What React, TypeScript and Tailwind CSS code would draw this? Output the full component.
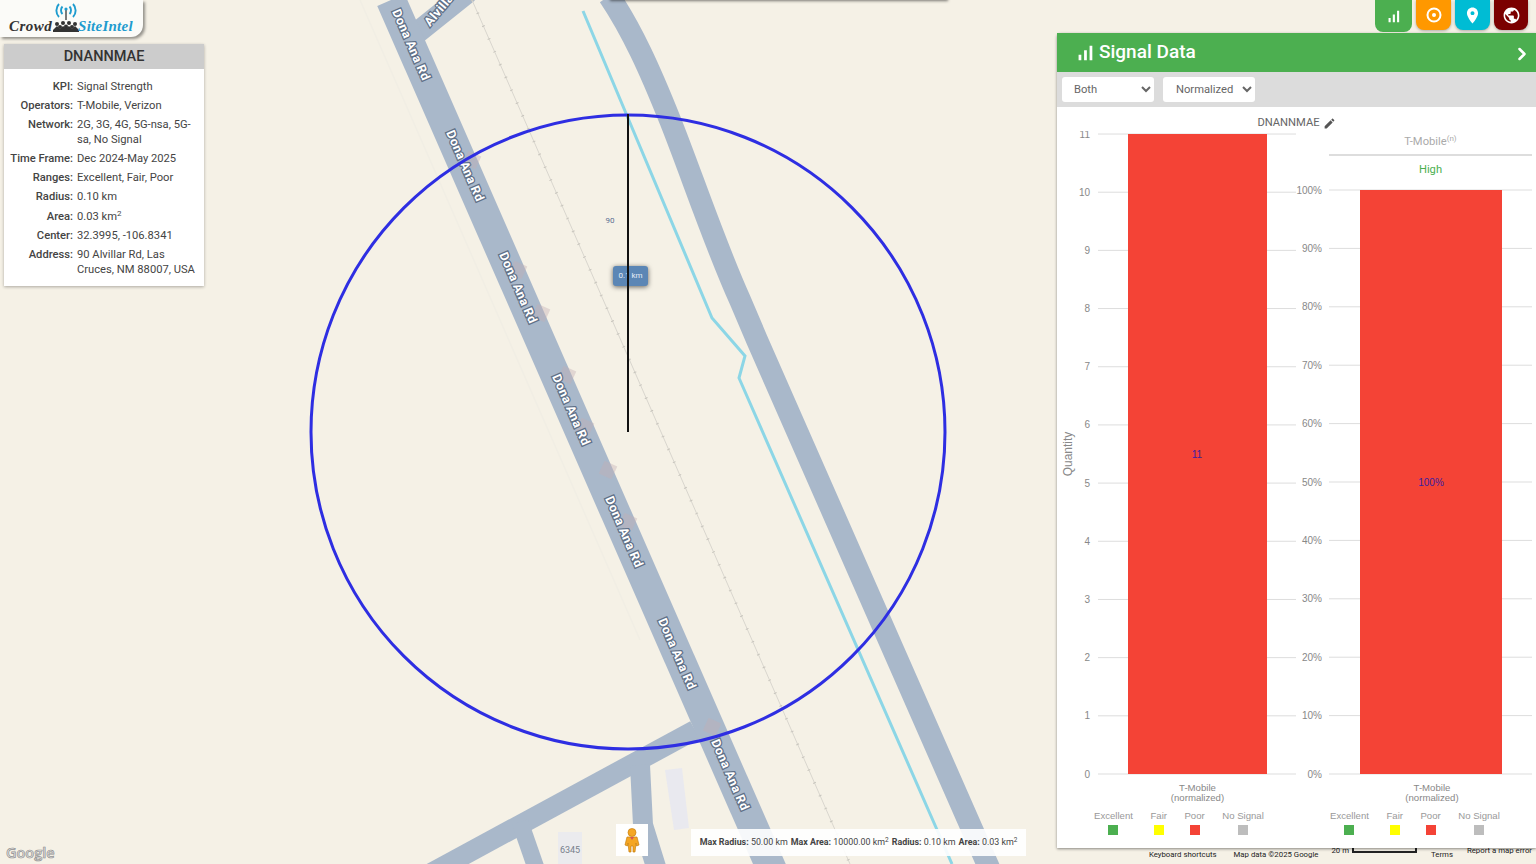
import { ChevronRight } from 'lucide-react';

const roadLabels = [
  { x: 411, y: 45 },
  { x: 465, y: 166 },
  { x: 518, y: 288 },
  { x: 571, y: 410 },
  { x: 624, y: 532 },
  { x: 677, y: 654 },
  { x: 730, y: 775 },
];

const patches = [
  { x: 472, y: 160 },
  { x: 518, y: 270 },
  { x: 541, y: 313 },
  { x: 567, y: 375 },
  { x: 585, y: 427 },
  { x: 608, y: 470 },
  { x: 628, y: 522 },
  { x: 712, y: 727 },
];

const details = [
  { label: 'KPI:', value: 'Signal Strength' },
  { label: 'Operators:', value: 'T-Mobile, Verizon' },
  { label: 'Network:', value: '2G, 3G, 4G, 5G-nsa, 5G-sa, No Signal' },
  { label: 'Time Frame:', value: 'Dec 2024-May 2025' },
  { label: 'Ranges:', value: 'Excellent, Fair, Poor' },
  { label: 'Radius:', value: '0.10 km' },
  { label: 'Area:', value: <>0.03 km<sup className="text-[8px]">2</sup></> },
  { label: 'Center:', value: '32.3995, -106.8341' },
  { label: 'Address:', value: '90 Alvillar Rd, Las Cruces, NM 88007, USA' },
];

const legend = [
  { label: 'Excellent', color: 'bg-[#4caf50]' },
  { label: 'Fair', color: 'bg-[#ffff00]' },
  { label: 'Poor', color: 'bg-[#f44336]' },
  { label: 'No Signal', color: 'bg-[#bdbdbd]' },
];

const countTicks = [0, 1, 2, 3, 4, 5, 6, 7, 8, 9, 10, 11];
const percentTicks = [0, 10, 20, 30, 40, 50, 60, 70, 80, 90, 100];

function MapLayer() {
  return (
    <svg className="absolute inset-0" width="1536" height="864" viewBox="0 0 1536 864">
      <path d="M360 0L640 640" stroke="#f1eee4" strokeWidth="1.5" fill="none" />
      <rect x="558" y="832" width="24" height="32" fill="#ebebee" />
      <path d="M665 770l17-2 7 60-15 2z" fill="#e9e9ef" />
      <g stroke="#a9b8ca" fill="none" strokeLinejoin="round">
        <path d="M695 730L420 879" strokeWidth="20" />
        <path d="M640 765L643 825L657 870" strokeWidth="20" />
        <path d="M520 822L536 868" strokeWidth="17" />
        <path d="M413 36L468 -8" strokeWidth="22" />
        <path d="M391 0L772 870" strokeWidth="30" />
        <path d="M609 -4C632 30 650 70 670 120C690 170 715 245 740 300L757 340L990 870" strokeWidth="22" />
      </g>
      <path d="M472 0L850 864" stroke="#d9d6ce" strokeWidth="1" fill="none" />
      <path d="M472 0L850 864" stroke="#c9c6be" strokeWidth="3" strokeDasharray="1 13" fill="none" />
      <path d="M583 11L712 318L745 356L739 378L938 832L952 864" stroke="#8cd6e6" strokeWidth="3" fill="none" />
      {patches.map((p) => (
        <rect key={p.x} x={p.x - 7} y={p.y - 7} width="14" height="14" fill="#c3aeb5" opacity="0.4" transform={`rotate(25 ${p.x} ${p.y})`} />
      ))}
      <g fill="#ffffff" stroke="#5f7087" strokeWidth="2.5" fontFamily="Roboto, sans-serif" fontWeight="700" fontSize="12.5" letterSpacing="0.4" style={{ paintOrder: 'stroke' }}>
        {roadLabels.map((l) => (
          <text key={l.y} x={l.x} y={l.y + 4} textAnchor="middle" transform={`rotate(66.4 ${l.x} ${l.y})`}>
            Dona Ana Rd
          </text>
        ))}
        <text x="430" y="27" transform="rotate(-50 430 27)">Alvillar Rd</text>
      </g>
      <text x="570" y="853" textAnchor="middle" fontFamily="Roboto, sans-serif" fontSize="9" fill="#77808c">6345</text>
      <text x="610" y="223" textAnchor="middle" fontFamily="Roboto, sans-serif" fontSize="8" fill="#5a6f92">90</text>
      <circle cx="628" cy="432" r="317" fill="none" stroke="#2e2ee2" strokeWidth="3" />
      <text x="6" y="858" fontFamily="'Open Sans', sans-serif" fontWeight="600" fontSize="14.5" fill="#e4e4e4" stroke="#8f8f8f" strokeWidth="0.7">Google</text>
    </svg>
  );
}

function Logo() {
  return (
    <div className="absolute left-0 top-0 flex h-[37px] w-[143px] flex-col items-start rounded-br-xl bg-[#fbfbf8] pl-[9px] shadow-[2px_2px_3px_rgba(0,0,0,0.4)]">
      <svg className="ml-[46px] mt-[2px]" width="22" height="19" viewBox="0 0 22 19" fill="none" stroke="#1f9ccf" strokeWidth="1.9">
        <path d="M4 2C0.5 5.5 0.5 11.5 4 15M18 2C21.5 5.5 21.5 11.5 18 15M7.5 4.5C5.5 6.5 5.5 10 7.5 12M14.5 4.5C16.5 6.5 16.5 10 14.5 12" />
        <path d="M11 7V18" stroke="#444" strokeWidth="1.4" />
        <circle cx="11" cy="7" r="1.6" fill="#1f9ccf" stroke="none" />
      </svg>
      <div className="-mt-[2px] flex items-center font-['Liberation_Serif',serif] text-[15px] font-bold italic leading-[15px] tracking-[0.45px]">
        <span className="text-[#333333]">Crowd</span>
        <svg className="ml-[1px]" width="26" height="13" viewBox="0 0 26 13" fill="#333333">
          <circle cx="4" cy="4" r="2" />
          <circle cx="10" cy="3" r="2" />
          <circle cx="16" cy="3" r="2" />
          <circle cx="22" cy="4" r="2" />
          <circle cx="7" cy="7" r="2" />
          <circle cx="13" cy="6.5" r="2" />
          <circle cx="19" cy="7" r="2" />
          <path d="M0 10l4-4 3 3 3-3 3 2 3-2 3 3 3-3 4 4v2H0z" />
        </svg>
        <span className="-ml-[1px] tracking-[0.25px] text-[#1f9ccf]">SiteIntel</span>
      </div>
    </div>
  );
}

function InfoCard() {
  return (
    <div className="absolute left-[4px] top-[44px] w-[200px] bg-white font-['Roboto',sans-serif] text-[#444444] shadow-[0_1px_3px_rgba(0,0,0,0.3)]">
      <div className="flex h-[25px] items-center justify-center bg-[#cccccc] text-[14.5px] font-medium text-[#333333]">DNANNMAE</div>
      <div className="grid grid-cols-[69px_118px] gap-x-[4px] gap-y-[4.7px] pb-[9px] pt-[11px] text-[11.2px] leading-[14.5px]">
        {details.map((d) => (
          <div key={d.label} className="contents">
            <div className="whitespace-nowrap text-right font-medium">{d.label}</div>
            <div>{d.value}</div>
          </div>
        ))}
      </div>
    </div>
  );
}

function TopButtons() {
  return (
    <div className="absolute right-[8px] top-0 flex items-start gap-[4px]">
      <div className="flex h-[32px] w-[37px] items-center justify-center rounded-b-lg bg-[#4caf50]">
        <svg width="17" height="17" viewBox="0 0 24 24" fill="#ffffff"><path d="M17 4h3v16h-3zM5 14h3v6H5zm6-5h3v11h-3z" /></svg>
      </div>
      <div className="flex h-[30px] w-[35px] items-center justify-center rounded-b-lg bg-[#ff9800] shadow-[0_1px_3px_rgba(0,0,0,0.3)]">
        <svg width="16" height="16" viewBox="0 0 16 16" fill="none" stroke="#ffffff" strokeWidth="2"><circle cx="8" cy="8" r="6.5" /><circle cx="8" cy="8" r="2" fill="#ffffff" stroke="none" /></svg>
      </div>
      <div className="flex h-[30px] w-[35px] items-center justify-center rounded-b-lg bg-[#00bcd4] shadow-[0_1px_3px_rgba(0,0,0,0.3)]">
        <svg width="19" height="19" viewBox="0 0 24 24" fill="#ffffff"><path d="M12 2C8.13 2 5 5.13 5 9c0 5.25 7 13 7 13s7-7.75 7-13c0-3.87-3.13-7-7-7zm0 9.5c-1.38 0-2.5-1.12-2.5-2.5s1.12-2.5 2.5-2.5 2.5 1.12 2.5 2.5-1.12 2.5-2.5 2.5z" /></svg>
      </div>
      <div className="flex h-[30px] w-[34px] items-center justify-center rounded-b-lg bg-[#7b0000] shadow-[0_1px_3px_rgba(0,0,0,0.3)]">
        <svg width="19" height="19" viewBox="0 0 24 24" fill="#ffffff"><path d="M12 2C6.48 2 2 6.48 2 12s4.48 10 10 10 10-4.48 10-10S17.52 2 12 2zm-1 17.93c-3.95-.49-7-3.85-7-7.93 0-.62.08-1.21.21-1.79L9 15v1c0 1.1.9 2 2 2v1.93zm6.9-2.54c-.26-.81-1-1.39-1.9-1.39h-1v-3c0-.55-.45-1-1-1H8v-2h2c.55 0 1-.45 1-1V7h2c1.1 0 2-.9 2-2v-.41c2.93 1.19 5 4.06 5 7.41 0 2.08-.8 3.97-2.1 5.39z" /></svg>
      </div>
    </div>
  );
}

function Legend({ className }: { className: string }) {
  return (
    <div className={`mt-[5px] flex gap-[17.5px] font-['Liberation_Sans',sans-serif] text-[9.6px] leading-[12px] text-[#999999] ${className}`}>
      {legend.map((l) => (
        <div key={l.label} className="flex flex-col items-center gap-[3px]">
          <span>{l.label}</span>
          <span className={`h-[10px] w-[10px] ${l.color}`} />
        </div>
      ))}
    </div>
  );
}

function CountChart() {
  return (
    <svg width="239" height="674" viewBox="1057 131 239 674" fontFamily="'Liberation Sans', sans-serif" fontSize="10" fill="#888888">
      {countTicks.map((t) => {
        const y = 774 - t * 58.18;
        return (
          <g key={t}>
            <line x1="1098" x2="1296" y1={y} y2={y} stroke="#dddddd" />
            <text x="1090" y={y + 3.5} textAnchor="end">{t}</text>
          </g>
        );
      })}
      <rect x="1128" y="134" width="139" height="640" fill="#f44336" />
      <text x="1197" y="458" textAnchor="middle" fill="#3a1fa0">11</text>
      <text x="1072" y="454" textAnchor="middle" fontSize="12" transform="rotate(-90 1072 454)">Quantity</text>
      <text x="1197.5" y="791" textAnchor="middle" fontSize="9.6">T-Mobile</text>
      <text x="1197.5" y="801" textAnchor="middle" fontSize="9.6">(normalized)</text>
    </svg>
  );
}

function PercentChart() {
  return (
    <svg width="240" height="623" viewBox="1296 182 240 623" fontFamily="'Liberation Sans', sans-serif" fontSize="10" fill="#888888">
      {percentTicks.map((t) => {
        const y = 774 - t * 5.84;
        return (
          <g key={t}>
            <line x1="1329" x2="1532" y1={y} y2={y} stroke="#dddddd" />
            <text x="1322" y={y + 3.5} textAnchor="end">{t}%</text>
          </g>
        );
      })}
      <rect x="1360" y="190" width="142" height="584" fill="#f44336" />
      <text x="1431" y="486" textAnchor="middle" fill="#3a1fa0">100%</text>
      <text x="1432" y="791" textAnchor="middle" fontSize="9.6">T-Mobile</text>
      <text x="1432" y="801" textAnchor="middle" fontSize="9.6">(normalized)</text>
    </svg>
  );
}

function SignalPanel() {
  return (
    <div className="absolute bottom-[16px] left-[1057px] right-0 top-[33px] flex flex-col rounded-tl-sm bg-white font-['Roboto',sans-serif] shadow-[0_1px_3px_rgba(0,0,0,0.45)]">
      <div className="flex h-[39px] shrink-0 items-center bg-[#4caf50] pl-[17px] pr-[4px] text-white">
        <svg width="22" height="22" viewBox="0 0 24 24" fill="#ffffff"><path d="M17 4h3v16h-3zM5 14h3v6H5zm6-5h3v11h-3z" /></svg>
        <span className="ml-[3px] text-[19px] font-medium">Signal Data</span>
        <ChevronRight className="ml-auto mt-[3px]" size={20} strokeWidth={3} />
      </div>
      <div className="flex h-[35px] shrink-0 items-center gap-[9px] bg-[#dcdcdc] px-[5px] text-[11.2px] text-[#666666]">
        <select className="h-[25px] w-[92px] rounded-[3px] bg-white pl-[8px]" defaultValue="Both">
          <option>Both</option>
        </select>
        <select className="h-[25px] w-[92px] rounded-[3px] bg-white pl-[9px]" defaultValue="Normalized">
          <option>Normalized</option>
        </select>
      </div>
      <div className="flex h-[24px] shrink-0 items-center justify-center gap-[3px] pt-[8px] text-[11.2px] text-[#666666]">
        DNANNMAE
        <svg width="13" height="13" viewBox="0 0 24 24" fill="#555555"><path d="M3 17.25V21h3.75L17.81 9.94l-3.75-3.75L3 17.25zM20.71 7.04c.39-.39.39-1.02 0-1.41l-2.34-2.34c-.39-.39-1.02-.39-1.41 0l-1.83 1.83 3.75 3.75 1.83-1.83z" /></svg>
      </div>
      <div className="flex">
        <div className="w-[239px] shrink-0">
          <CountChart />
          <Legend className="ml-[37px]" />
        </div>
        <div className="w-[240px] shrink-0">
          <div className="ml-[33px] mr-[4px] flex h-[25px] items-center justify-center border-b-2 border-[#dddddd] pb-[1px] text-[11.2px] text-[#aaaaaa]">
            <span>T-Mobile<sup className="text-[8px]">(n)</sup></span>
          </div>
          <div className="ml-[33px] mr-[4px] flex h-[26px] items-center justify-center pt-[3px] text-[11.2px] text-[#4caf50]">High</div>
          <PercentChart />
          <Legend className="ml-[34px]" />
        </div>
      </div>
    </div>
  );
}

function MapControls() {
  return (
    <>
      <div className="absolute left-[610px] top-[-4px] h-[4px] w-[338px] shadow-[0_1px_3px_rgba(0,0,0,0.5)]" />
      <div className="absolute left-[613px] top-[266px] flex h-[20px] w-[35px] items-center justify-center rounded-[3px] bg-[#5b86b5] font-['Roboto',sans-serif] text-[8px] text-[#e6edf5] shadow-[0_1px_5px_rgba(0,0,0,0.6)]">
        0.1 km
      </div>
      <div className="absolute left-[627px] top-[114px] h-[318px] w-[2px] bg-[#111111]" />
      <div className="absolute left-[616px] top-[824px] flex h-[32px] w-[32px] items-center justify-center bg-white">
        <svg width="16" height="25" viewBox="0 0 16 25">
          <path d="M3 9h10l2 8-2.5 1-.5-3-1 9H9v-6H7v6H5l-1-9-.5 3L1 17z" fill="#f5a623" stroke="#c77f10" strokeWidth="0.7" />
          <circle cx="8" cy="4.5" r="4" fill="#f5a623" stroke="#c77f10" strokeWidth="0.7" />
          <path d="M6 9h4l-2 3z" fill="#d9534f" />
        </svg>
      </div>
      <div className="absolute left-[691px] top-[829px] flex h-[27px] w-[335px] items-center justify-center gap-[3px] whitespace-nowrap bg-white/90 font-['Roboto',sans-serif] text-[8.9px] text-[#444444]">
        <span><b className="font-bold">Max Radius:</b> 50.00 km</span>
        <span><b className="font-bold">Max Area:</b> 10000.00 km<sup className="text-[6.5px]">2</sup></span>
        <span><b className="font-bold">Radius:</b> 0.10 km</span>
        <span><b className="font-bold">Area:</b> 0.03 km<sup className="text-[6.5px]">2</sup></span>
      </div>
      <div className="absolute bottom-0 right-[4px] flex h-[16px] items-start whitespace-nowrap font-['Roboto',sans-serif] text-[7.8px] leading-[11px] text-[#222222]">
        <span className="mt-[1px]">Keyboard shortcuts</span>
        <span className="ml-[17px] mt-[1px]">Map data ©2025 Google</span>
        <span className="ml-[13px] -mt-[3px]">20 m</span>
        <span className="ml-[3px] -mt-[1px] h-[6px] w-[65px] border-x-2 border-b-2 border-[#222222]" />
        <span className="ml-[14px] mt-[1px]">Terms</span>
        <span className="ml-[14px] -mt-[3px]">Report a map error</span>
      </div>
    </>
  );
}

export default function App() {
  return (
    <div className="relative h-[864px] w-[1536px] overflow-hidden bg-[#f5f1e6]">
      <MapLayer />
      <MapControls />
      <Logo />
      <InfoCard />
      <TopButtons />
      <SignalPanel />
    </div>
  );
}
